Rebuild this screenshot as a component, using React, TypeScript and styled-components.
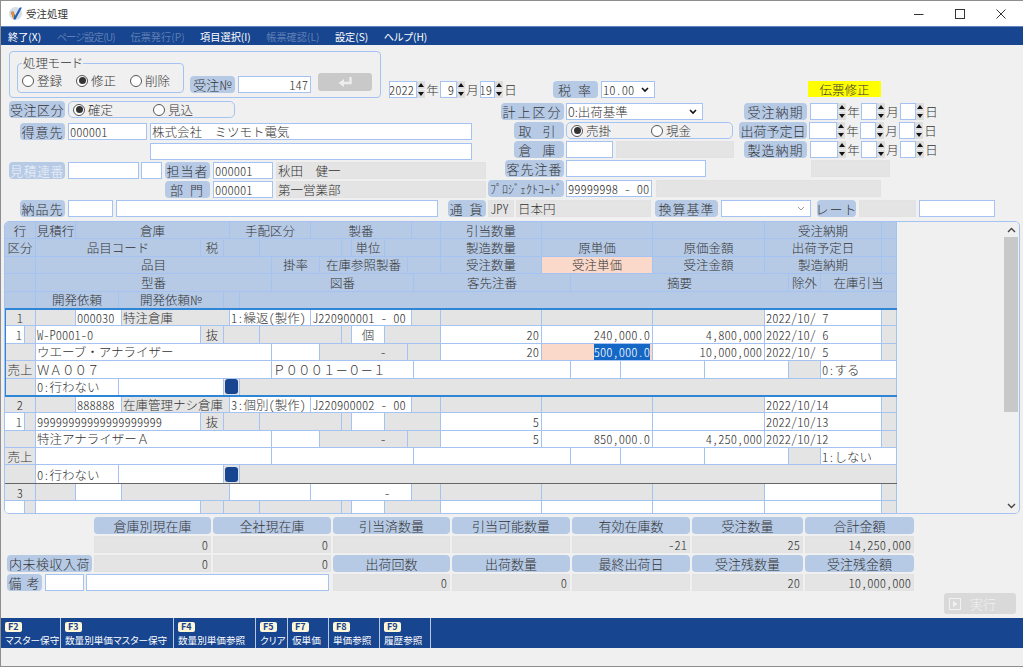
import React, { FC, ReactNode } from "react";
import styled, { createGlobalStyle } from "styled-components";

const GlobalStyle = createGlobalStyle`
  html, body { margin: 0; padding: 0; background: #f0f0f0; }
  body {
    font-family: "Noto Sans CJK JP", "Noto Sans", sans-serif;
    font-size: 12.5px;
    font-weight: 300;
    color: #333;
    overflow: hidden;
  }
  * { box-sizing: border-box; }
`;

const BLUE = "#17458f";
const LABEL = "#b6cae6";
const LINE = "#a5c3f2";
const GRAY = "#e4e4e4";
const PINK = "#fbd9ca";

const Window = styled.div`
  width: 1023px;
  height: 667px;
  display: flex;
  flex-direction: column;
  background: #f0f0f0;
  border-left: 1px solid #8e8e8e;
  border-top: 1px solid #8e8e8e;
  border-bottom: 1px solid #8e8e8e;
  overflow: hidden;
`;

const TitleBar = styled.div`
  height: 25px;
  flex: none;
  display: flex;
  align-items: center;
  background: #fff;
  padding: 0 2px 0 7px;
  font-size: 10.5px;
  font-weight: 400;
  font-feature-settings: "palt";
`;

const TitleText = styled.span`
  margin-left: 3px;
  flex: 1;
`;

const WinButton = styled.div`
  width: 41px;
  height: 25px;
  display: flex;
  align-items: center;
  justify-content: center;
`;

const MenuBar = styled.div`
  height: 19px;
  flex: none;
  display: flex;
  align-items: center;
  gap: 15.5px;
  background: ${BLUE};
  padding-left: 7px;
  border-top: 1px solid #5f86bd;
  font-feature-settings: "palt";
`;

const MenuItem = styled.span<{ $off?: boolean; $ls?: number }>`
  font-size: 10.2px;
  font-weight: 400;
  letter-spacing: ${({ $ls }) => $ls ?? 0}px;
  color: ${({ $off }) => ($off ? "#5f7fb5" : "#fff")};
`;

const Form = styled.div`
  padding: 6px 0 0 0;
  display: flex;
  flex-direction: column;
`;

const Row = styled.div<{ $h?: number; $mt?: number; $ml?: number }>`
  display: flex;
  align-items: flex-start;
  height: ${({ $h }) => $h ?? 17}px;
  margin-top: ${({ $mt }) => $mt ?? 0}px;
  margin-left: ${({ $ml }) => $ml ?? 0}px;
  flex: none;
`;

const Label = styled.div<{ $w: number; $ml?: number; $ls?: number; $off?: boolean; $fs?: number }>`
  width: ${({ $w }) => $w}px;
  height: 17px;
  margin-left: ${({ $ml }) => $ml ?? 0}px;
  flex: none;
  display: flex;
  align-items: center;
  justify-content: center;
  background: ${LABEL};
  border-radius: 4px;
  white-space: pre;
  font-size: ${({ $fs }) => $fs ?? 13}px;
  letter-spacing: ${({ $ls }) => $ls ?? 0}px;
  color: ${({ $off }) => ($off ? "#eef2f8" : "#333")};
`;

const Field = styled.div<{
  $w: number;
  $ml?: number;
  $gray?: boolean;
  $right?: boolean;
  $half?: boolean;
}>`
  width: ${({ $w }) => $w}px;
  height: 17px;
  margin-left: ${({ $ml }) => $ml ?? 0}px;
  flex: none;
  display: flex;
  align-items: center;
  justify-content: ${({ $right }) => ($right ? "flex-end" : "flex-start")};
  padding: 0 2px 0 1px;
  background: ${({ $gray }) => ($gray ? GRAY : "#fff")};
  border: 1px solid ${({ $gray }) => ($gray ? "#e2e2e2" : LINE)};
  white-space: pre;
  overflow: hidden;
  font-feature-settings: ${({ $half }) => ($half ? '"hwid"' : "normal")};
`;

const Chevron = styled.svg`
  position: absolute;
  right: 5px;
  top: 5px;
`;

const SelectBox = styled(Field)`
  position: relative;
`;

const Select: FC<{ w: number; ml?: number; faint?: boolean; half?: boolean; children?: ReactNode }> = ({
  w,
  ml,
  faint,
  half,
  children,
}) => (
  <SelectBox $w={w} $ml={ml} $half={half}>
    {children}
    <Chevron width="8" height="6" viewBox="0 0 8 6">
      <path d="M1 1 L4 4 L7 1" fill="none" stroke={faint ? "#9a9a9a" : "#111"} strokeWidth={faint ? 1 : 1.6} />
    </Chevron>
  </SelectBox>
);

const SpinBox = styled.div`
  width: 8px;
  height: 17px;
  flex: none;
  display: flex;
  flex-direction: column;
  gap: 1px;
`;

const SpinPart = styled.div`
  flex: 1;
  background: #dedede;
  display: flex;
  align-items: center;
  justify-content: center;
`;

const Spin = () => (
  <SpinBox>
    <SpinPart>
      <svg width="6" height="4" viewBox="0 0 6 4">
        <path d="M3 0 L6 4 L0 4 Z" fill="#111" />
      </svg>
    </SpinPart>
    <SpinPart>
      <svg width="6" height="4" viewBox="0 0 6 4">
        <path d="M0 0 L6 0 L3 4 Z" fill="#111" />
      </svg>
    </SpinPart>
  </SpinBox>
);

const Unit = styled.span<{ $w?: number }>`
  width: ${({ $w }) => $w ?? 15}px;
  height: 17px;
  flex: none;
  display: flex;
  align-items: center;
  justify-content: center;
`;

const DateParts: FC<{ w1: number; w2: number; w3: number; y?: string; m?: string; d?: string }> = ({
  w1,
  w2,
  w3,
  y,
  m,
  d,
}) => (
  <>
    <Field $w={w1} $right $half>{y}</Field>
    <Spin />
    <Unit>年</Unit>
    <Field $w={w2} $right $half>{m}</Field>
    <Spin />
    <Unit>月</Unit>
    <Field $w={w3} $right $half>{d}</Field>
    <Spin />
    <Unit>日</Unit>
  </>
);

const ModePanel = styled.div`
  width: 372px;
  height: 47px;
  margin-left: 8px;
  flex: none;
  border: 1px solid ${LINE};
  border-radius: 4px;
  display: flex;
  align-items: flex-start;
  padding: 11px 0 0 7px;
`;

const ModeGroup = styled.div`
  position: relative;
  width: 167px;
  height: 30px;
  flex: none;
  border: 1px solid ${LINE};
  border-radius: 4px;
  display: flex;
  align-items: center;
  padding: 5px 0 0 4px;
`;

const Legend = styled.span`
  position: absolute;
  left: 4px;
  top: -9px;
  padding: 0 1px;
  background: #f0f0f0;
  line-height: 16px;
  font-feature-settings: "palt";
`;

const NumberBlock = styled.div`
  display: flex;
  margin-top: 13px;
`;

const RadioItem = styled.span<{ $w: number }>`
  width: ${({ $w }) => $w}px;
  flex: none;
  display: flex;
  align-items: center;
  gap: 3px;
`;

const RadioMark = styled.span<{ $on?: boolean }>`
  width: 12px;
  height: 12px;
  flex: none;
  border: 1px solid #555;
  border-radius: 50%;
  background: #fff;
  display: flex;
  align-items: center;
  justify-content: center;
  &::after {
    content: "";
    display: ${({ $on }) => ($on ? "block" : "none")};
    width: 7px;
    height: 7px;
    border-radius: 50%;
    background: #333;
  }
`;

const Radio: FC<{ w: number; on?: boolean; children: ReactNode }> = ({ w, on, children }) => (
  <RadioItem $w={w}>
    <RadioMark $on={on} />
    {children}
  </RadioItem>
);

const RadioPanel = styled.div<{ $w: number; $ml?: number }>`
  width: ${({ $w }) => $w}px;
  height: 17px;
  margin-left: ${({ $ml }) => $ml ?? 0}px;
  flex: none;
  display: flex;
  align-items: center;
  padding-left: 4px;
  border: 1px solid ${LINE};
  border-radius: 5px;
`;

const EnterButton = styled.div`
  width: 54px;
  height: 18px;
  margin: -3px 0 0 7px;
  flex: none;
  background: #c9c9c9;
  border-radius: 3px;
  display: flex;
  align-items: center;
  justify-content: center;
`;

const Status = styled.div`
  width: 73px;
  height: 16px;
  margin-left: 153px;
  background: #ffff00;
  display: flex;
  align-items: center;
  justify-content: center;
  flex: none;
`;

const Columns = styled.div`
  display: flex;
  margin-top: 2px;
`;

const LeftCol = styled.div`
  width: 487px;
  flex: none;
  display: flex;
  flex-direction: column;
`;

const RightCol = styled.div`
  flex: 1;
  display: flex;
  flex-direction: column;
  padding-top: 2px;
`;

/* grid */

const GridPanel = styled.div`
  margin: 4px 0 0 3px;
  width: 1016px;
  height: 293px;
  flex: none;
  display: flex;
  border: 1px solid ${LINE};
  border-radius: 5px;
  overflow: hidden;
`;

const Sheet = styled.div`
  width: 892px;
  flex: none;
  display: flex;
  flex-direction: column;
  overflow: hidden;
`;

const SheetRest = styled.div`
  flex: 1;
  display: flex;
  justify-content: flex-end;
  padding-right: 1px;
`;

const Scrollbar = styled.div`
  width: 14px;
  height: 100%;
  display: flex;
  flex-direction: column;
  background: #f0f0f0;
`;

const ScrollArrow = styled.div`
  height: 15px;
  flex: none;
  display: flex;
  align-items: center;
  justify-content: center;
`;

const ScrollTrack = styled.div`
  flex: 1;
`;

const ScrollThumb = styled.div`
  height: 175px;
  background: #c8c8c8;
`;

const Line = styled.div<{ $h?: number; $dark?: boolean }>`
  display: flex;
  height: ${({ $h }) => $h ?? 17.4}px;
  flex: none;
  border-bottom: 1px solid ${({ $dark }) => ($dark ? "#666" : LINE)};
`;

type Kind = "h" | "w" | "g" | "p" | "s";

const Cell = styled.div<{ $w: number; $kind: Kind; $right?: boolean; $left?: boolean; $half?: boolean }>`
  width: ${({ $w }) => $w}px;
  flex: none;
  display: flex;
  align-items: center;
  justify-content: ${({ $right, $left }) => ($right ? "flex-end" : $left ? "flex-start" : "center")};
  padding: 0 ${({ $right }) => ($right ? 2 : 1)}px;
  border-right: 1px solid ${LINE};
  white-space: pre;
  overflow: hidden;
  font-feature-settings: ${({ $half }) => ($half ? '"hwid"' : "normal")};
  background: ${({ $kind }) =>
    $kind === "h" ? LABEL : $kind === "g" ? GRAY : $kind === "p" || $kind === "s" ? PINK : "#fff"};
`;

const Selected = styled.span`
  background: #1467c4;
  color: #fff;
`;

const Knob = styled.div`
  width: 14px;
  height: 15px;
  border-radius: 3px;
  background: ${BLUE};
`;

const Record = styled.div`
  display: flex;
  flex-direction: column;
  margin-right: -1px;
  outline: 2px solid #2f86d6;
  outline-offset: -1px;
  position: relative;
  z-index: 1;
`;

/* c = [width, text, kind, align] */
type C = [number, ReactNode?, Kind?, ("r" | "l" | "c" | "hr" | "hl" | "hc")?];

const renderCells = (cells: C[]) =>
  cells.map(([w, text, kind, align], i) => (
    <Cell
      key={i}
      $w={w}
      $kind={kind ?? "w"}
      $right={align === "r" || align === "hr"}
      $left={align === "l" || align === "hl"}
      $half={align === "hr" || align === "hl" || align === "hc"}
    >
      {text}
    </Cell>
  ));

const SheetLine: FC<{ cells: C[]; dark?: boolean; h?: number }> = ({ cells, dark, h }) => (
  <Line $dark={dark} $h={h}>
    {renderCells(cells)}
  </Line>
);

const headLines: C[][] = [
  [[31, "行", "h"], [40, "見積行", "h"], [154, "倉庫", "h"], [81, "手配区分", "h"], [101, "製番", "h"], [29, "", "h"], [101, "引当数量", "h"], [111, "", "h"], [112, "", "h"], [117, "受注納期", "h"], [15, "", "h"]],
  [[31, "区分", "h"], [165, "品目コード", "h"], [23, "税", "h"], [36, "", "h"], [82, "", "h"], [10, "", "h"], [33, "単位", "h"], [56, "", "h"], [101, "製造数量", "h"], [111, "原単価", "h"], [112, "原価金額", "h"], [117, "出荷予定日", "h"], [15, "", "h"]],
  [[31, "", "h"], [236, "品目", "h"], [48, "掛率", "h"], [88, "在庫参照製番", "h"], [33, "", "h"], [101, "受注数量", "h"], [111, "受注単価", "p"], [112, "受注金額", "h"], [117, "製造納期", "h"], [15, "", "h"]],
  [[31, "", "h"], [236, "型番", "h"], [142, "図番", "h"], [157, "客先注番", "h"], [218, "摘要", "h"], [32, "除外", "h"], [76, "在庫引当", "h"]],
  [[31, "", "h"], [83, "開発依頼", "h"], [105, "開発依頼№", "h"], [16, "", "h"], [657, "", "h"]],
];

const makeRecord = (r: {
  no: string;
  code: string;
  wh: string;
  tehai: string;
  seiban: string;
  d1: string;
  d2: string;
  d3: string;
  item: string;
  tani: string;
  seizo: string;
  gen: string;
  genKin: string;
  name: string;
  juchu: string;
  tanka: ReactNode;
  tankaKind: Kind;
  kin: string;
  katanum: ReactNode;
  zuban: ReactNode;
  hiki: string;
}): C[][] => [
  [[31, r.no, "g", "hc"], [40, "", "g"], [46, r.code, "w", "hl"], [108, r.wh, "g", "l"], [81, r.tehai, "w", "hl"], [101, r.seiban, "w", "hl"], [29, "", "g"], [101, "", "g"], [111, "", "g"], [112, "", "g"], [117, r.d1, "w", "hl"], [15, "", "g"]],
  [[20, "1", "w", "hr"], [11, "", "g"], [165, r.item, "w", "hl"], [23, "抜", "g"], [36, "", "g"], [82, "", "g"], [10, "", "g"], [33, r.tani, "w"], [56, "", "g"], [101, r.seizo, "w", "hr"], [111, r.gen, "w", "hr"], [112, r.genKin, "w", "hr"], [117, r.d2, "w", "hl"], [15, "", "g"]],
  [[31, "", "g"], [236, r.name, "w", "l"], [48, "", "w"], [88, "-   ", "g", "hr"], [33, "", "g"], [101, r.juchu, "w", "hr"], [111, r.tanka, r.tankaKind, "hr"], [112, r.kin, "w", "hr"], [117, r.d3, "w", "hl"], [15, "", "g"]],
  [[31, "売上", "g"], [236, r.katanum, "w", "l"], [142, r.zuban, "w", "l"], [157, "", "w"], [50, "", "w"], [84, "", "w"], [84, "", "w"], [32, "", "g"], [76, r.hiki, "w", "hl"]],
  [[31, "", "g"], [83, "0:行わない", "w", "hl"], [105, "", "w"], [16, <Knob key="k" />, "g"], [657, "", "g"]],
];

const rec1 = makeRecord({
  no: "1",
  code: "000030",
  wh: "特注倉庫",
  tehai: "1:繰返(製作)",
  seiban: "J220900001 - 00",
  d1: "2022/10/ 7",
  d2: "2022/10/ 6",
  d3: "2022/10/ 5",
  item: "W-P0001-0",
  tani: "個",
  seizo: "20",
  gen: "240,000.0",
  genKin: "4,800,000",
  name: "ウエーブ・アナライザー",
  juchu: "20",
  tanka: <Selected>500,000.0</Selected>,
  tankaKind: "s",
  kin: "10,000,000",
  katanum: "ＷＡ００７",
  zuban: "Ｐ０００１－０－１",
  hiki: "0:する",
});

const rec2 = makeRecord({
  no: "2",
  code: "888888",
  wh: "在庫管理ナシ倉庫",
  tehai: "3:個別(製作)",
  seiban: "J220900002 - 00",
  d1: "2022/10/14",
  d2: "2022/10/13",
  d3: "2022/10/12",
  item: "99999999999999999999",
  tani: "",
  seizo: "5",
  gen: "",
  genKin: "",
  name: "特注アナライザーＡ",
  juchu: "5",
  tanka: "850,000.0",
  tankaKind: "w",
  kin: "4,250,000",
  katanum: "",
  zuban: "",
  hiki: "1:しない",
});

const rec3Top: C[] = [[31, "3", "g", "hc"], [40, "", "g"], [46, "", "w"], [108, "", "g"], [81, "", "w"], [101, "-   ", "w", "hr"], [29, "", "g"], [101, "", "g"], [111, "", "g"], [112, "", "g"], [117, "", "w"], [15, "", "g"]];
const rec3Second: C[] = [[20, "", "w"], [11, "", "g"], [165, "", "w"], [23, "", "g"], [36, "", "g"], [82, "", "g"], [10, "", "g"], [33, "", "w"], [56, "", "g"], [101, "", "w"], [111, "", "w"], [112, "", "w"], [117, "", "w"], [15, "", "g"]];

/* bottom */

const Summary = styled.div`
  margin-top: 3px;
  display: flex;
  flex-direction: column;
  gap: 2px;
`;

const SumRow = styled.div<{ $ml: number }>`
  display: flex;
  gap: 2px;
  margin-left: ${({ $ml }) => $ml}px;
  height: 17px;
`;

const RunRow = styled.div`
  display: flex;
  justify-content: flex-end;
  padding-right: 7px;
  height: 21px;
  margin-top: 2px;
  flex: none;
`;

const RunButton = styled.div`
  width: 72px;
  height: 21px;
  background: #d9d9d9;
  border-radius: 3px;
  display: flex;
  align-items: center;
  gap: 9px;
  padding-left: 5px;
  color: #f2f2f2;
  font-size: 13px;
`;

const FnBar = styled.div`
  height: 30px;
  margin-top: 4px;
  flex: none;
  display: flex;
  background: ${BLUE};
`;

const FnItem = styled.div<{ $w: number }>`
  width: ${({ $w }) => $w}px;
  flex: none;
  display: flex;
  flex-direction: column;
  align-items: flex-start;
  padding: 4px 0 0 4px;
  border-right: 1px solid #b8c8e0;
  color: #fff;
  font-size: 9.6px;
  font-weight: 400;
  line-height: 14px;
  white-space: nowrap;
  font-feature-settings: "palt";
`;

const FnKey = styled.span`
  height: 10px;
  padding: 0 3px;
  background: #fdf6d8;
  color: #17458f;
  border-radius: 2px;
  font-size: 9px;
  font-weight: 700;
  line-height: 10px;
  margin-bottom: 1px;
`;

const fnKeys: [number, string, string][] = [
  [60, "F2", "マスター保守"],
  [113, "F3", "数量別単価マスター保守"],
  [82, "F4", "数量別単価参照"],
  [32, "F5", "クリア"],
  [41, "F7", "仮単価"],
  [51, "F8", "単価参照"],
  [51, "F9", "履歴参照"],
];

const menus: [string, boolean, number?][] = [
  ["終了(X)", false],
  ["ページ設定(U)", true, -0.8],
  ["伝票発行(P)", true],
  ["項目選択(I)", false],
  ["帳票確認(L)", true],
  ["設定(S)", false],
  ["ヘルプ(H)", false],
];

export default function App() {
  return (
    <>
      <GlobalStyle />
      <Window>
        <TitleBar>
          <svg width="15" height="15" viewBox="0 0 14 14">
            <path d="M7 1 a6 6 0 1 0 .01 0" fill="#d9dde6" />
            <path d="M2.5 5.5 L5 5.2 L6.6 9 L11 1.5 L13 1.5 L7 12.5 L5.4 12.5 Z" fill="#1b5fb8" />
            <path d="M2.5 5.5 L5 5.2 L6 8 L5.4 12.5 Z" fill="#e8912d" />
          </svg>
          <TitleText>受注処理</TitleText>
          <WinButton>
            <svg width="10" height="10" viewBox="0 0 10 10">
              <path d="M0 5.5 H9.5" stroke="#333" strokeWidth="1" />
            </svg>
          </WinButton>
          <WinButton>
            <svg width="10" height="10" viewBox="0 0 10 10">
              <rect x="0.5" y="0.5" width="9" height="9" fill="none" stroke="#333" strokeWidth="1" />
            </svg>
          </WinButton>
          <WinButton>
            <svg width="10" height="10" viewBox="0 0 10 10">
              <path d="M0.5 0.5 L9.5 9.5 M9.5 0.5 L0.5 9.5" stroke="#333" strokeWidth="1" />
            </svg>
          </WinButton>
        </TitleBar>
        <MenuBar>
          {menus.map(([text, off, ls]) => (
            <MenuItem key={text} $off={off} $ls={ls}>{text}</MenuItem>
          ))}
        </MenuBar>

        <Form>
          <Row $h={48}>
            <ModePanel>
              <ModeGroup>
                <Legend>処理モード</Legend>
                <Radio w={54}>登録</Radio>
                <Radio w={54} on>修正</Radio>
                <Radio w={50}>削除</Radio>
              </ModeGroup>
              <NumberBlock>
                <Label $w={45} $ml={6} $fs={13}>受注№</Label>
                <Field $w={73} $ml={3} $right $half>147</Field>
                <EnterButton>
                  <svg width="16" height="12" viewBox="0 0 16 12">
                    <path d="M13.5 1 V7 H6" fill="none" stroke="#eee" strokeWidth="2.4" />
                    <path d="M7 3 V11 L1.5 7 Z" fill="#eee" />
                  </svg>
                </EnterButton>
              </NumberBlock>
            </ModePanel>
            <Row $mt={30} $ml={8}>
              <DateParts w1={28} w2={17} w3={15} y="2022" m="9" d="19" />
              <Label $w={45} $ml={35} $ls={2}>税 率</Label>
              <Select w={54} ml={3} half>10.00</Select>
              <Status>伝票修正</Status>
            </Row>
          </Row>

          <Columns>
            <LeftCol>
              <Row>
                <Label $w={56} $ml={8} $ls={0.5}>受注区分</Label>
                <RadioPanel $w={167} $ml={3}>
                  <Radio w={80} on>確定</Radio>
                  <Radio w={70}>見込</Radio>
                </RadioPanel>
              </Row>
              <Row $mt={5}>
                <Label $w={45} $ml={19} $ls={1}>得意先</Label>
                <Field $w={79} $ml={3} $half>000001</Field>
                <Field $w={322} $ml={3}>株式会社　ミツモト電気</Field>
              </Row>
              <Row $mt={3}>
                <Field $w={322} $ml={149} />
              </Row>
              <Row $mt={2}>
                <Label $w={56} $ml={8} $ls={0.5} $off>見積連番</Label>
                <Field $w={71} $ml={3} />
                <Field $w={21} $ml={2} />
                <Label $w={45} $ml={3} $ls={1}>担当者</Label>
                <Field $w={60} $ml={3} $half>000001</Field>
                <Field $w={210} $ml={3} $gray>秋田　健一</Field>
              </Row>
              <Row $mt={2}>
                <Label $w={45} $ml={164} $ls={2}>部 門</Label>
                <Field $w={60} $ml={3} $half>000001</Field>
                <Field $w={210} $ml={3} $gray>第一営業部</Field>
              </Row>
            </LeftCol>
            <RightCol>
              <Row>
                <Label $w={63} $ml={13} $ls={2}>計上区分</Label>
                <Select w={137} ml={2}>0:出荷基準</Select>
                <Label $w={63} $ml={41} $ls={1}>受注納期</Label>
                <Row $ml={3}>
                  <DateParts w1={28} w2={16} w3={16} />
                </Row>
              </Row>
              <Row $mt={2}>
                <Label $w={50} $ml={26} $ls={4}>取 引</Label>
                <RadioPanel $w={167} $ml={2}>
                  <Radio w={80} on>売掛</Radio>
                  <Radio w={70}>現金</Radio>
                </RadioPanel>
                <Label $w={68} $ml={6}>出荷予定日</Label>
                <Row $ml={2}>
                  <DateParts w1={28} w2={16} w3={16} />
                </Row>
              </Row>
              <Row $mt={2}>
                <Label $w={50} $ml={26} $ls={4}>倉 庫</Label>
                <Field $w={47} $ml={2} />
                <Field $w={118} $ml={3} $gray />
                <Label $w={63} $ml={10} $ls={1}>製造納期</Label>
                <Row $ml={3}>
                  <DateParts w1={28} w2={16} w3={16} />
                </Row>
              </Row>
              <Row $mt={2}>
                <Label $w={59} $ml={17} $ls={1}>客先注番</Label>
                <Field $w={140} $ml={2} />
                <Field $w={79} $ml={105} $gray />
              </Row>
              <Row $mt={3}>
                <Label $w={76} $fs={12}>ﾌﾟﾛｼﾞｪｸﾄｺｰﾄﾞ</Label>
                <Field $w={86} $ml={2} $half>99999998 - 00</Field>
                <Field $w={225} $ml={4} $gray />
              </Row>
            </RightCol>
          </Columns>

          <Row $mt={2}>
            <Label $w={45} $ml={19} $ls={1}>納品先</Label>
            <Field $w={45} $ml={3} />
            <Field $w={322} $ml={3} />
            <Label $w={38} $ml={10} $ls={2}>通 貨</Label>
            <Field $w={26} $ml={2} $gray $half>JPY</Field>
            <Field $w={135} $ml={2} $gray>日本円</Field>
            <Label $w={63} $ml={4} $ls={1}>換算基準</Label>
            <Select w={90} ml={3} faint />
            <Label $w={39} $ml={6} $ls={1}>レート</Label>
            <Field $w={57} $ml={3} $gray />
            <Field $w={76} $ml={3} />
          </Row>
        </Form>

        <GridPanel>
          <Sheet>
            {headLines.map((cells, i) => (
              <SheetLine key={i} cells={cells} />
            ))}
            <Record>
              {rec1.map((cells, i) => (
                <SheetLine key={i} cells={cells} />
              ))}
            </Record>
            {rec2.map((cells, i) => (
              <SheetLine key={i} cells={cells} dark={i === 4} h={i === 4 ? 18.5 : undefined} />
            ))}
            <SheetLine cells={rec3Top} />
            <SheetLine cells={rec3Second} />
          </Sheet>
          <SheetRest>
            <Scrollbar>
              <ScrollArrow>
                <svg width="9" height="6" viewBox="0 0 9 6">
                  <path d="M1 5 L4.5 1.5 L8 5" fill="none" stroke="#444" strokeWidth="1.4" />
                </svg>
              </ScrollArrow>
              <ScrollThumb />
              <ScrollTrack />
              <ScrollArrow>
                <svg width="9" height="6" viewBox="0 0 9 6">
                  <path d="M1 1 L4.5 4.5 L8 1" fill="none" stroke="#444" strokeWidth="1.4" />
                </svg>
              </ScrollArrow>
            </Scrollbar>
          </SheetRest>
        </GridPanel>

        <Summary>
          <SumRow $ml={93}>
            <Label $w={117}>倉庫別現在庫</Label>
            <Label $w={118}>全社現在庫</Label>
            <Label $w={117}>引当済数量</Label>
            <Label $w={118}>引当可能数量</Label>
            <Label $w={118}>有効在庫数</Label>
            <Label $w={111}>受注数量</Label>
            <Label $w={109}>合計金額</Label>
          </SumRow>
          <SumRow $ml={93}>
            <Field $w={117} $gray $right $half>0</Field>
            <Field $w={118} $gray $right $half>0</Field>
            <Field $w={117} $gray />
            <Field $w={118} $gray />
            <Field $w={118} $gray $right $half>-21</Field>
            <Field $w={111} $gray $right $half>25</Field>
            <Field $w={109} $gray $right $half>14,250,000</Field>
          </SumRow>
          <SumRow $ml={6}>
            <Label $w={85} $ls={0.5}>内未検収入荷</Label>
            <Field $w={117} $gray $right $half>0</Field>
            <Field $w={118} $gray $right $half>0</Field>
            <Label $w={117}>出荷回数</Label>
            <Label $w={118}>出荷数量</Label>
            <Label $w={118}>最終出荷日</Label>
            <Label $w={111}>受注残数量</Label>
            <Label $w={109}>受注残金額</Label>
          </SumRow>
          <SumRow $ml={6}>
            <Label $w={35} $ls={1}>備 考</Label>
            <Field $w={39} $ml={1} />
            <Field $w={243} />
            <Field $w={117} $ml={2} $gray $right $half>0</Field>
            <Field $w={118} $gray $right $half>0</Field>
            <Field $w={118} $gray />
            <Field $w={111} $gray $right $half>20</Field>
            <Field $w={109} $gray $right $half>10,000,000</Field>
          </SumRow>
        </Summary>

        <RunRow>
          <RunButton>
            <svg width="12" height="12" viewBox="0 0 12 12">
              <rect x="0.5" y="0.5" width="11" height="11" fill="none" stroke="#f2f2f2" />
              <path d="M4 3 L8.5 6 L4 9 Z" fill="#f2f2f2" />
            </svg>
            実行
          </RunButton>
        </RunRow>

        <FnBar>
          {fnKeys.map(([w, key, text]) => (
            <FnItem key={key} $w={w}>
              <FnKey>{key}</FnKey>
              {text}
            </FnItem>
          ))}
        </FnBar>
      </Window>
    </>
  );
}
